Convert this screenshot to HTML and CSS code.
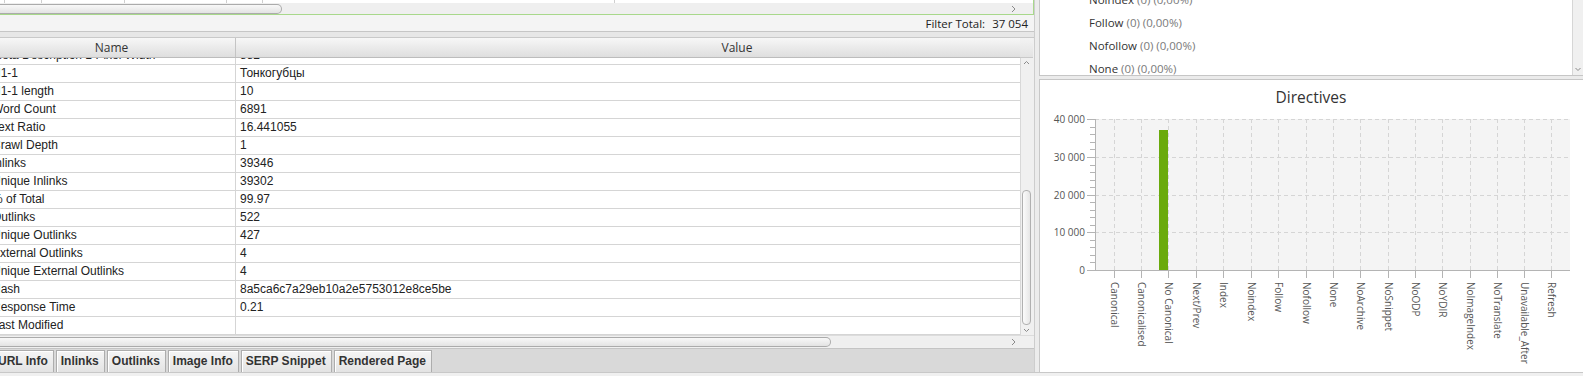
FILE: index.html
```html
<!DOCTYPE html>
<html lang="en">
<head>
    <meta charset="UTF-8">
    <title>URL Details - Directives</title>
    <link rel="stylesheet" href="styles.css">
</head>
<body>
    <div class="window">
        <div class="left">
            <div class="top-table">
                <div class="stub-row">
                    <span class="stub" style="width: 5px"></span>
                    <span class="stub" style="width: 37px"></span>
                    <span class="stub" style="width: 83px"></span>
                    <span class="stub" style="width: 102px"></span>
                    <span class="stub" style="width: 36px"></span>
                    <span class="stub" style="width: 352px"></span>
                </div>
                <div class="hbar">
                    <div class="hbar-track">
                        <div class="thumb-h thumb-top"></div>
                        <svg class="arrow" width="6" height="8" viewBox="0 0 6 8"><polyline points="1,1 4,4 1,7" fill="none" stroke="#8a8a8a" stroke-width="1"/></svg>
                    </div>
                    <div class="corner"></div>
                </div>
            </div>

            <div class="filter-bar ui">
                <span>Filter Total:</span>
                <span class="filter-num">37 054</span>
            </div>
            <div class="gap-band"></div>

            <div class="grid">
                <div class="grid-main">
                    <div class="grid-head ui">
                        <div class="head-name">Name</div>
                        <div class="head-value">Value</div>
                    </div>
                    <div class="grid-body">
                        <div class="rows">
                            <div class="row"><div class="cell-name">Meta Description 1 Pixel Width</div><div class="cell-value">882</div></div>
                            <div class="row"><div class="cell-name">H1-1</div><div class="cell-value">Тонкогубцы</div></div>
                            <div class="row"><div class="cell-name">H1-1 length</div><div class="cell-value">10</div></div>
                            <div class="row"><div class="cell-name">Word Count</div><div class="cell-value">6891</div></div>
                            <div class="row"><div class="cell-name">Text Ratio</div><div class="cell-value">16.441055</div></div>
                            <div class="row"><div class="cell-name">Crawl Depth</div><div class="cell-value">1</div></div>
                            <div class="row"><div class="cell-name">Inlinks</div><div class="cell-value">39346</div></div>
                            <div class="row"><div class="cell-name">Unique Inlinks</div><div class="cell-value">39302</div></div>
                            <div class="row"><div class="cell-name">% of Total</div><div class="cell-value">99.97</div></div>
                            <div class="row"><div class="cell-name">Outlinks</div><div class="cell-value">522</div></div>
                            <div class="row"><div class="cell-name">Unique Outlinks</div><div class="cell-value">427</div></div>
                            <div class="row"><div class="cell-name">External Outlinks</div><div class="cell-value">4</div></div>
                            <div class="row"><div class="cell-name">Unique External Outlinks</div><div class="cell-value">4</div></div>
                            <div class="row"><div class="cell-name">Hash</div><div class="cell-value">8a5ca6c7a29eb10a2e5753012e8ce5be</div></div>
                            <div class="row"><div class="cell-name">Response Time</div><div class="cell-value">0.21</div></div>
                            <div class="row"><div class="cell-name">Last Modified</div><div class="cell-value"></div></div>
                        </div>
                    </div>
                </div>
                <div class="vbar">
                    <div class="vbar-head"></div>
                    <div class="vbar-track">
                        <svg class="varrow" width="11" height="10" viewBox="0 0 11 10"><polyline points="3,6 5.5,3.5 8,6" fill="none" stroke="#8a8a8a" stroke-width="1"/></svg>
                        <div class="vbar-space"></div>
                        <div class="thumb-v"></div>
                        <svg class="varrow" width="11" height="10" viewBox="0 0 11 10"><polyline points="3,4 5.5,6.5 8,4" fill="none" stroke="#8a8a8a" stroke-width="1"/></svg>
                    </div>
                </div>
            </div>

            <div class="hbar hbar-bottom">
                <div class="hbar-track">
                    <div class="thumb-h thumb-bottom"></div>
                    <svg class="arrow" width="6" height="8" viewBox="0 0 6 8"><polyline points="1,1 4,4 1,7" fill="none" stroke="#8a8a8a" stroke-width="1"/></svg>
                </div>
                <div class="corner"></div>
            </div>

            <div class="tabbar">
                <div class="tab tab-first">URL Info</div>
                <div class="tab">Inlinks</div>
                <div class="tab">Outlinks</div>
                <div class="tab">Image Info</div>
                <div class="tab">SERP Snippet</div>
                <div class="tab">Rendered Page</div>
            </div>
        </div>

        <div class="splitter"></div>

        <div class="right">
            <div class="list">
                <div class="list-items ui">
                    <div class="list-inner">
                        <div class="item"><span class="item-name">Noindex</span> <span class="item-count">(0) (0,00%)</span></div>
                        <div class="item"><span class="item-name">Follow</span> <span class="item-count">(0) (0,00%)</span></div>
                        <div class="item"><span class="item-name">Nofollow</span> <span class="item-count">(0) (0,00%)</span></div>
                        <div class="item"><span class="item-name">None</span> <span class="item-count">(0) (0,00%)</span></div>
                    </div>
                </div>
                <div class="list-scroll">
                    <svg width="10" height="10" viewBox="0 0 10 10"><polyline points="2.5,4 5,6.5 7.5,4" fill="none" stroke="#8a8a8a" stroke-width="1"/></svg>
                </div>
            </div>
            <div class="sep"></div>
            <div class="chart">
                <svg class="chart-svg" width="543" height="292" viewBox="1040 80 543 292">
                    <text class="chart-title" x="1311" y="97">Directives</text>

                    <rect x="1095" y="119" width="475" height="151" fill="#f4f4f4"/>

                    <g class="grid-lines">
                        <line x1="1095" y1="119.5" x2="1570" y2="119.5"/>
                        <line x1="1095" y1="157.5" x2="1570" y2="157.5"/>
                        <line x1="1095" y1="195.5" x2="1570" y2="195.5"/>
                        <line x1="1095" y1="232.5" x2="1570" y2="232.5"/>
                        <line x1="1114.5" y1="119" x2="1114.5" y2="270"/>
                        <line x1="1141.5" y1="119" x2="1141.5" y2="270"/>
                        <line x1="1168.5" y1="119" x2="1168.5" y2="270"/>
                        <line x1="1196.5" y1="119" x2="1196.5" y2="270"/>
                        <line x1="1223.5" y1="119" x2="1223.5" y2="270"/>
                        <line x1="1251.5" y1="119" x2="1251.5" y2="270"/>
                        <line x1="1278.5" y1="119" x2="1278.5" y2="270"/>
                        <line x1="1306.5" y1="119" x2="1306.5" y2="270"/>
                        <line x1="1333.5" y1="119" x2="1333.5" y2="270"/>
                        <line x1="1360.5" y1="119" x2="1360.5" y2="270"/>
                        <line x1="1388.5" y1="119" x2="1388.5" y2="270"/>
                        <line x1="1415.5" y1="119" x2="1415.5" y2="270"/>
                        <line x1="1442.5" y1="119" x2="1442.5" y2="270"/>
                        <line x1="1470.5" y1="119" x2="1470.5" y2="270"/>
                        <line x1="1497.5" y1="119" x2="1497.5" y2="270"/>
                        <line x1="1524.5" y1="119" x2="1524.5" y2="270"/>
                        <line x1="1551.5" y1="119" x2="1551.5" y2="270"/>
                    </g>

                    <rect x="1159" y="130" width="9" height="140" fill="#6aaa0c"/>

                    <g class="axis">
                        <line x1="1095.5" y1="119" x2="1095.5" y2="270"/>
                        <line x1="1095" y1="270.5" x2="1570" y2="270.5"/>
                        <line x1="1087" y1="119.5" x2="1095" y2="119.5"/>
                        <line x1="1087" y1="157.5" x2="1095" y2="157.5"/>
                        <line x1="1087" y1="195.5" x2="1095" y2="195.5"/>
                        <line x1="1087" y1="232.5" x2="1095" y2="232.5"/>
                        <line x1="1087" y1="270.5" x2="1095" y2="270.5"/>
                        <line x1="1090" y1="127.5" x2="1095" y2="127.5"/>
                        <line x1="1090" y1="134.5" x2="1095" y2="134.5"/>
                        <line x1="1090" y1="142.5" x2="1095" y2="142.5"/>
                        <line x1="1090" y1="149.5" x2="1095" y2="149.5"/>
                        <line x1="1090" y1="165.5" x2="1095" y2="165.5"/>
                        <line x1="1090" y1="172.5" x2="1095" y2="172.5"/>
                        <line x1="1090" y1="180.5" x2="1095" y2="180.5"/>
                        <line x1="1090" y1="187.5" x2="1095" y2="187.5"/>
                        <line x1="1090" y1="202.5" x2="1095" y2="202.5"/>
                        <line x1="1090" y1="210.5" x2="1095" y2="210.5"/>
                        <line x1="1090" y1="217.5" x2="1095" y2="217.5"/>
                        <line x1="1090" y1="225.5" x2="1095" y2="225.5"/>
                        <line x1="1090" y1="240.5" x2="1095" y2="240.5"/>
                        <line x1="1090" y1="247.5" x2="1095" y2="247.5"/>
                        <line x1="1090" y1="255.5" x2="1095" y2="255.5"/>
                        <line x1="1090" y1="262.5" x2="1095" y2="262.5"/>
                        <line x1="1114.5" y1="270" x2="1114.5" y2="278"/>
                        <line x1="1141.5" y1="270" x2="1141.5" y2="278"/>
                        <line x1="1168.5" y1="270" x2="1168.5" y2="278"/>
                        <line x1="1196.5" y1="270" x2="1196.5" y2="278"/>
                        <line x1="1223.5" y1="270" x2="1223.5" y2="278"/>
                        <line x1="1251.5" y1="270" x2="1251.5" y2="278"/>
                        <line x1="1278.5" y1="270" x2="1278.5" y2="278"/>
                        <line x1="1306.5" y1="270" x2="1306.5" y2="278"/>
                        <line x1="1333.5" y1="270" x2="1333.5" y2="278"/>
                        <line x1="1360.5" y1="270" x2="1360.5" y2="278"/>
                        <line x1="1388.5" y1="270" x2="1388.5" y2="278"/>
                        <line x1="1415.5" y1="270" x2="1415.5" y2="278"/>
                        <line x1="1442.5" y1="270" x2="1442.5" y2="278"/>
                        <line x1="1470.5" y1="270" x2="1470.5" y2="278"/>
                        <line x1="1497.5" y1="270" x2="1497.5" y2="278"/>
                        <line x1="1524.5" y1="270" x2="1524.5" y2="278"/>
                        <line x1="1551.5" y1="270" x2="1551.5" y2="278"/>
                    </g>

                    <g class="y-labels">
                        <text x="1085" y="119">40 000</text>
                        <text x="1085" y="157">30 000</text>
                        <text x="1085" y="195">20 000</text>
                        <text x="1085" y="232">10 000</text>
                        <text x="1085" y="270">0</text>
                    </g>

                    <g class="x-labels">
                        <text transform="translate(1114.5 282) rotate(90)">Canonical</text>
                        <text transform="translate(1141.5 282) rotate(90)">Canonicalised</text>
                        <text transform="translate(1168.5 282) rotate(90)">No Canonical</text>
                        <text transform="translate(1196.5 282) rotate(90)">Next/Prev</text>
                        <text transform="translate(1223.5 282) rotate(90)">Index</text>
                        <text transform="translate(1251.5 282) rotate(90)">Noindex</text>
                        <text transform="translate(1278.5 282) rotate(90)">Follow</text>
                        <text transform="translate(1306.5 282) rotate(90)">Nofollow</text>
                        <text transform="translate(1333.5 282) rotate(90)">None</text>
                        <text transform="translate(1360.5 282) rotate(90)">NoArchive</text>
                        <text transform="translate(1388.5 282) rotate(90)">NoSnippet</text>
                        <text transform="translate(1415.5 282) rotate(90)">NoODP</text>
                        <text transform="translate(1442.5 282) rotate(90)">NoYDIR</text>
                        <text transform="translate(1470.5 282) rotate(90)">NoImageIndex</text>
                        <text transform="translate(1497.5 282) rotate(90)">NoTranslate</text>
                        <text transform="translate(1524.5 282) rotate(90)">Unavailable_After</text>
                        <text transform="translate(1551.5 282) rotate(90)">Refresh</text>
                    </g>
                </svg>
            </div>
        </div>
    </div>
    <div class="status"></div>
</body>
</html>
```

FILE: styles.css
```css
* {
    margin: 0;
    padding: 0;
    box-sizing: border-box;
}

body {
    width: 1583px;
    height: 376px;
    overflow: hidden;
    background: #f0f0f0;
    font-family: "Liberation Sans", Arial, sans-serif;
    font-size: 12px;
    color: #222;
}

.ui {
    font-family: "Open Sans", "Noto Sans", sans-serif;
    font-size: 11.5px;
}

.window {
    display: flex;
    height: 372px;
}

/* ---------- left panel ---------- */

.left {
    width: 1034px;
    display: flex;
    flex-direction: column;
    background: #f0f0f0;
}

.top-table {
    height: 15px;
    border-right: 1px solid #a8d88b;
    border-bottom: 1px solid #a8d88b;
    display: flex;
    flex-direction: column;
}

.stub-row {
    height: 3px;
    display: flex;
    background: #fff;
}

.stub {
    height: 3px;
    border-right: 1px solid #cfcfcf;
}

.hbar {
    height: 11px;
    display: flex;
}

.hbar-track {
    width: 1020px;
    display: flex;
    align-items: center;
    justify-content: space-between;
    background: #efefef;
    padding-right: 3px;
}

.thumb-h {
    height: 10px;
    border: 1px solid #ababab;
    border-left: none;
    border-radius: 0 5px 5px 0;
    background: linear-gradient(#f8f8f8, #e3e3e3);
}

.thumb-top {
    width: 282px;
}

.thumb-bottom {
    width: 831px;
}

.corner {
    width: 13px;
    background: #f0f0f0;
}

.filter-bar {
    height: 17px;
    display: flex;
    justify-content: flex-end;
    align-items: center;
    gap: 7px;
    padding-right: 6px;
    background: #f4f4f4;
    border-bottom: 1px solid #c6c6c6;
    color: #222;
}

.gap-band {
    height: 6px;
    background: #e7e7e7;
    border-bottom: 1px solid #c9c9c9;
}

.grid {
    height: 297px;
    display: flex;
}

.grid-main {
    width: 1020px;
    display: flex;
    flex-direction: column;
    overflow: hidden;
}

.grid-head {
    height: 20px;
    width: 1250px;
    margin-left: -12px;
    display: flex;
    background: linear-gradient(#f7f7f7, #dedede);
    border-bottom: 1px solid #bcbcbc;
    color: #333;
    font-size: 12px;
}

.head-name {
    width: 248px;
    text-align: center;
    line-height: 19px;
    border-right: 1px solid #c4c4c4;
}

.head-value {
    flex: 1;
    text-align: center;
    line-height: 19px;
}

.grid-body {
    flex: 1;
    overflow: hidden;
    background: #fff;
}

.rows {
    width: 1250px;
    margin-left: -12px;
    margin-top: -11px;
}

.row {
    height: 18px;
    display: flex;
    border-bottom: 1px solid #d5d5d5;
    line-height: 17px;
    white-space: nowrap;
}

.cell-name {
    width: 248px;
    padding-left: 4px;
    border-right: 1px solid #d5d5d5;
    overflow: hidden;
}

.cell-value {
    flex: 1;
    padding-left: 4px;
}

.vbar {
    width: 13px;
    display: flex;
    flex-direction: column;
}

.vbar-head {
    height: 20px;
    background: linear-gradient(#f3f3f3, #e3e3e3);
    border-bottom: 1px solid #c9c9c9;
}

.vbar-track {
    flex: 1;
    display: flex;
    flex-direction: column;
    background: #f0f0f0;
    border-left: 1px solid #d8d8d8;
}

.varrow {
    display: block;
    height: 10px;
}

.vbar-space {
    height: 122px;
}

.thumb-v {
    height: 135px;
    width: 9px;
    margin-left: 1px;
    border: 1px solid #b0b0b0;
    border-radius: 4px;
    background: linear-gradient(90deg, #fbfbfb, #e6e6e6);
}

.hbar-bottom {
    height: 13px;
    padding: 1px 0;
    border-top: 1px solid #dcdcdc;
}

.tabbar {
    height: 24px;
    display: flex;
    align-items: flex-end;
    background: #d9d9d9;
    border-top: 1px solid #c4c4c4;
    overflow: hidden;
}

.tab {
    height: 22px;
    padding: 0 5px 0 4px;
    margin-right: 2px;
    border: 1px solid #adadad;
    border-bottom: none;
    background: linear-gradient(#f5f5f5, #e3e3e3);
    box-shadow: inset 1px 1px 0 #fff;
    font-weight: bold;
    color: #333;
    line-height: 21px;
    white-space: nowrap;
}

.tab-first {
    margin-left: -7px;
}

/* ---------- splitter + right panel ---------- */

.splitter {
    width: 5px;
    background: #ececec;
    border-left: 1px solid #cdcdcd;
}

.right {
    width: 544px;
    display: flex;
    flex-direction: column;
}

.list {
    height: 75px;
    display: flex;
    background: #fff;
    border-left: 1px solid #c8c8c8;
}

.list-items {
    flex: 1;
    overflow: hidden;
    padding-left: 49px;
    font-size: 11.5px;
}

.list-inner {
    margin-top: -12px;
}

.item {
    height: 23px;
    line-height: 23px;
    white-space: nowrap;
}

.item-name {
    color: #333;
}

.item-count {
    color: #7a7a7a;
}

.list-scroll {
    width: 11px;
    display: flex;
    flex-direction: column;
    justify-content: flex-end;
    padding-bottom: 1px;
    background: #f0f0f0;
    border-left: 1px solid #d6d6d6;
}

.sep {
    height: 5px;
    background: #ebebeb;
    border-top: 1px solid #c6c6c6;
    border-bottom: 1px solid #c6c6c6;
}

.chart {
    height: 292px;
    background: #fff;
    border-left: 1px solid #c8c8c8;
}

.chart-svg {
    display: block;
}

.chart-title {
    font-family: "Open Sans", "Noto Sans", sans-serif;
    font-size: 15.5px;
    fill: #333;
    text-anchor: middle;
    dominant-baseline: central;
}

.grid-lines line {
    stroke: #d5d5d5;
    stroke-width: 1;
    stroke-dasharray: 4 3;
}

.axis line {
    stroke: #b4b4b4;
    stroke-width: 1;
}

.y-labels text {
    font-family: "Open Sans", "Noto Sans", sans-serif;
    font-size: 10px;
    fill: #555;
    text-anchor: end;
    dominant-baseline: central;
}

.x-labels text {
    font-family: "Open Sans", "Noto Sans", sans-serif;
    font-size: 10px;
    fill: #555;
    dominant-baseline: central;
}

.status {
    height: 4px;
    background: #f0f0f0;
    border-top: 1px solid #c8c8c8;
}
```
